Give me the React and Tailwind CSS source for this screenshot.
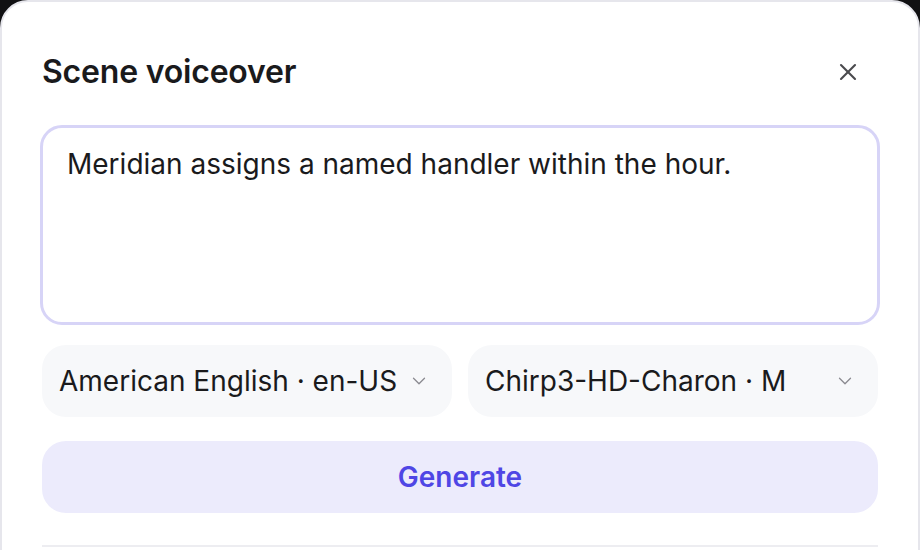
import { X, ChevronDown } from "lucide-react";

function VoiceSelect({ value }) {
  return (
    <button className="flex h-[72px] flex-1 items-center justify-between rounded-[24px] bg-[#f7f8fa] pl-[17px] pr-[22px] text-left">
      <span className="text-[28px] leading-[36px] text-[#1a1a1c]">{value}</span>
      <ChevronDown className="h-[22px] w-[22px] text-[#8a8a90]" strokeWidth={1.4} />
    </button>
  );
}

export default function App() {
  return (
    <main
      className="h-[550px] overflow-hidden bg-[#111113]"
      style={{ fontFamily: "Inter, 'Noto Sans', sans-serif" }}
    >
      <div className="h-[600px] rounded-t-[28px] border-2 border-[#e6e6ec] bg-white px-10 pt-[50px]">
        <div className="flex items-center justify-between">
          <h1 className="text-[32px] font-semibold leading-[40px] tracking-[-0.2px] text-[#1a1a1c]">
            Scene voiceover
          </h1>
          <button className="mr-[14px] flex h-8 w-8 items-center justify-center text-[#4a4a4e]">
            <X className="h-[28px] w-[28px]" strokeWidth={1.8} />
          </button>
        </div>

        <textarea
          className="-mx-[2px] mt-[33px] block h-[200px] w-[calc(100%+4px)] resize-none rounded-[22px] border-[3px] border-[#d7d4f7] bg-white px-[24px] pt-[18px] text-[28px] leading-[36px] text-[#1a1a1c] outline-none"
          defaultValue="Meridian assigns a named handler within the hour."
        />

        <div className="mt-[20px] flex gap-4">
          <VoiceSelect value="American English · en-US" />
          <VoiceSelect value="Chirp3-HD-Charon · M" />
        </div>

        <button className="mt-[24px] flex h-[72px] w-full items-center justify-center rounded-[24px] bg-[#ecebfc] text-[28px] font-semibold text-[#4f46e5]">
          Generate
        </button>

        <div className="mt-[32px] h-[2px] bg-[#ededf1]" />
      </div>
    </main>
  );
}
